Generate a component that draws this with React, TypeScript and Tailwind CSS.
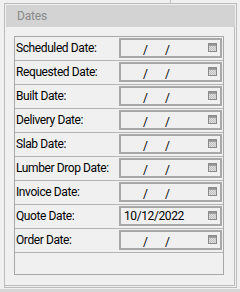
const rows = [
  { label: 'Scheduled Date:', value: '' },
  { label: 'Requested Date:', value: '' },
  { label: 'Built Date:', value: '' },
  { label: 'Delivery Date:', value: '' },
  { label: 'Slab Date:', value: '' },
  { label: 'Lumber Drop Date:', value: '' },
  { label: 'Invoice Date:', value: '' },
  { label: 'Quote Date:', value: '10/12/2022' },
  { label: 'Order Date:', value: '' },
]

function CalendarIcon() {
  return (
    <div className="w-[9px] h-[9px] border border-[#8a8a8a] bg-[#cfcfcf] flex flex-col">
      <div className="h-[2px] bg-[#9a9a9a]" />
      <div className="flex-1 bg-[repeating-conic-gradient(#c4c4c4_0_25%,#dedede_0_50%)] bg-[length:2px_2px]" />
    </div>
  )
}

function DateBox({ value }: { value: string }) {
  return (
    <div className="relative flex items-center w-[103px] h-[20px] border-2 border-[#a8a8a8] bg-[#f0f0f0]">
      {value ? (
        <span className="pl-[3px] text-black">{value}</span>
      ) : (
        <>
          <span className="absolute left-[22px] top-[1px]">/</span>
          <span className="absolute left-[44px] top-[1px]">/</span>
        </>
      )}
      <div className="absolute right-[3px] top-[3px]">
        <CalendarIcon />
      </div>
    </div>
  )
}

export default function App() {
  return (
    <div className="relative w-[240px] h-[292px] overflow-hidden bg-[#f0f0f0] font-['Roboto','Liberation_Sans',sans-serif] text-[12px] tracking-[-0.4px] text-black">
      <div className="absolute left-[170px] top-0 w-px h-[3px] bg-[#c0c0c0]" />
      <div className="ml-[4px] mt-[3px] w-[233px] h-[285px] border border-[#bcbcbc] flex flex-col">
        <div className="h-[22px] mx-px mt-px bg-[#d3d3d3] flex items-center pl-[11px] text-[12px] tracking-[-0.2px] text-[#8a8a8a]">
          Dates
        </div>
        <div className="flex-1 mr-px mb-px border-r border-b border-[#bcbcbc] pl-[9px] pt-[9px]">
          <div className="w-[210px] border border-[#a8a8a8]">
            {rows.map((r) => (
              <div key={r.label} className="flex items-start h-[24px] pt-px border-b border-[#b4b4b4]">
                <div className="w-[104px] pl-px h-[20px] flex items-center whitespace-nowrap">{r.label}</div>
                <DateBox value={r.value} />
              </div>
            ))}
            <div className="h-[21px]" />
          </div>
        </div>
      </div>
      <div className="absolute left-0 bottom-0 w-full h-[3px] bg-[#d6d6d6]" />
    </div>
  )
}
